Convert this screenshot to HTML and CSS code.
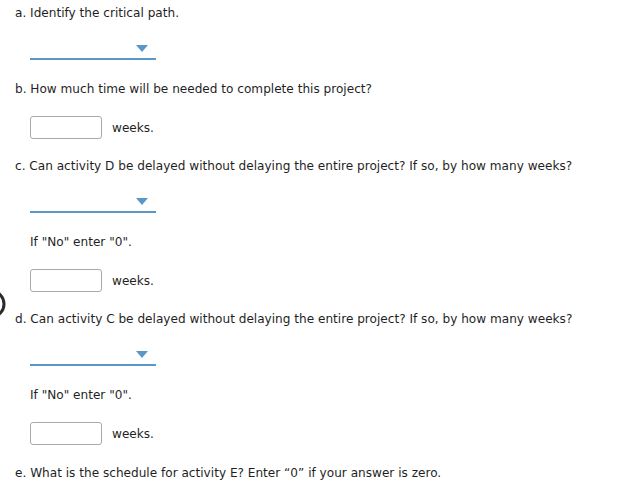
FILE: index.html
```html
<!DOCTYPE html>
<html>
<head>
<meta charset="utf-8">
<link rel="stylesheet" href="styles.css">
</head>
<body>
<svg class="edge-arc" width="8" height="34" viewBox="0 0 8 34"><circle cx="-9" cy="17" r="13" fill="none" stroke="#2b2b2b" stroke-width="3"/></svg>
<div class="sheet">
  <p class="q">a. Identify the critical path.</p>
  <div class="select"><span class="caret"></span></div>

  <p class="q">b. How much time will be needed to complete this project?</p>
  <div class="answer"><span class="box"></span><span class="unit">weeks.</span></div>

  <p class="q">c. Can activity D be delayed without delaying the entire project? If so, by how many weeks?</p>
  <div class="select"><span class="caret"></span></div>
  <p class="note">If "No" enter "0".</p>
  <div class="answer"><span class="box"></span><span class="unit">weeks.</span></div>

  <p class="q">d. Can activity C be delayed without delaying the entire project? If so, by how many weeks?</p>
  <div class="select"><span class="caret"></span></div>
  <p class="note">If "No" enter "0".</p>
  <div class="answer"><span class="box"></span><span class="unit">weeks.</span></div>

  <p class="q">e. What is the schedule for activity E? Enter “0” if your answer is zero.</p>
</div>
</body>
</html>
```
FILE: styles.css
```css
html, body {
  margin: 0;
  padding: 0;
  background: #ffffff;
}
body {
  font-family: "DejaVu Sans", Verdana, sans-serif;
  font-size: 12.1px;
  line-height: 16px;
  color: #1f1f1f;
  position: relative;
  width: 639px;
  height: 493px;
  overflow: hidden;
}
.edge-arc {
  position: absolute;
  left: 0;
  top: 287px;
}
.sheet {
  display: flex;
  flex-direction: column;
  align-items: flex-start;
  padding: 5px 0 0 15px;
}
.q, .note {
  margin: 20px 0 0 0;
}
.q:first-child {
  margin-top: 0;
}
.answer + .q {
  margin-top: 19px;
}
.answer + .q:last-child {
  margin-top: 20px;
}
.note {
  margin-left: 15px;
}
.select {
  margin: 18px 0 0 15px;
  width: 126px;
  height: 19px;
  border-bottom: 2px solid #5a97c9;
  display: flex;
  justify-content: flex-end;
  align-items: flex-start;
}
.select + .q, .select + .note {
  margin-top: 21px;
}
.caret {
  margin: 6px 8px 0 0;
  width: 0;
  height: 0;
  border-left: 6.5px solid transparent;
  border-right: 6.5px solid transparent;
  border-top: 7px solid #5a97c9;
}
.answer {
  margin: 19px 0 0 15px;
  display: flex;
  align-items: center;
  gap: 10px;
}
.box {
  width: 72px;
  height: 23px;
  box-sizing: border-box;
  border: 1.5px solid #a9a9a9;
  border-radius: 3px;
  background: #fff;
}
.unit {
  line-height: 16px;
}
```
